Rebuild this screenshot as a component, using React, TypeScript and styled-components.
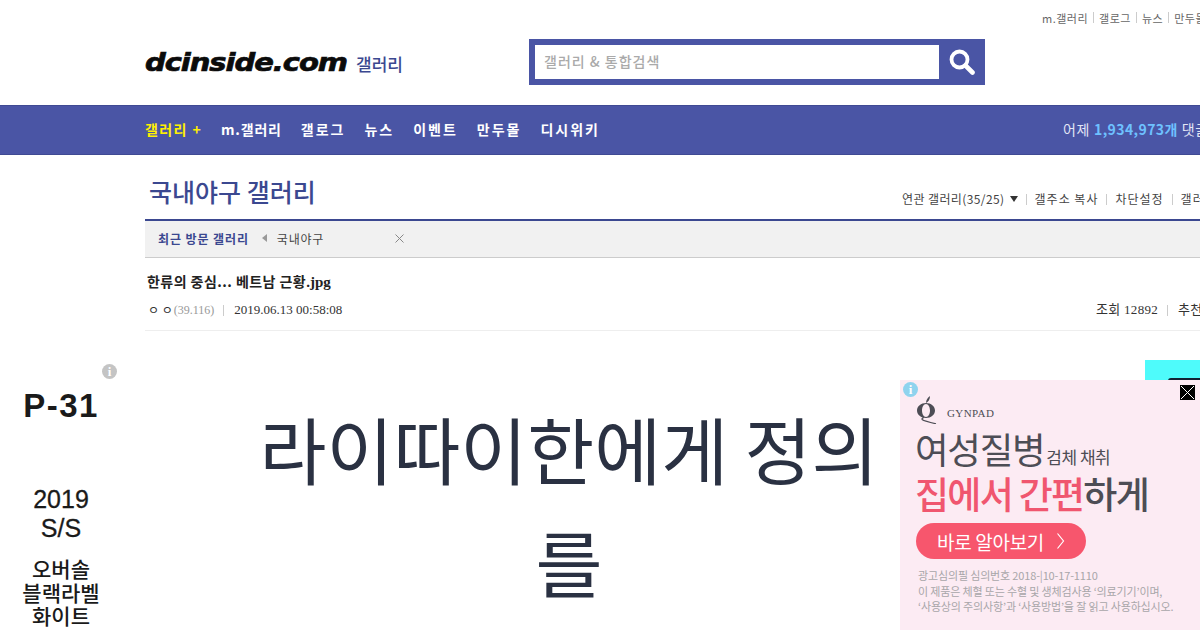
import styled, { createGlobalStyle } from 'styled-components';

const navItems = [
  { label: 'm.갤러리', spacing: 0.8 },
  { label: '갤로그', spacing: 2 },
  { label: '뉴스', spacing: 2 },
  { label: '이벤트', spacing: 2 },
  { label: '만두몰', spacing: 2 },
  { label: '디시위키', spacing: 2 },
];
const topLinks = ['m.갤러리', '갤로그', '뉴스', '만두몰'];
const toolLinks = ['갤주소 복사', '차단설정', '갤러리 정보'];

const App = () => {
  return (
    <Page>
      <GlobalStyle />
      <Header>
        <TopLinks>
          {topLinks.map((link, i) => (
            <TopLink key={link} $first={i === 0}>
              {link}
            </TopLink>
          ))}
        </TopLinks>
        <HeaderMain>
          <LogoWrap>
            <Logo>dcinside.com</Logo>
            <LogoSub>갤러리</LogoSub>
          </LogoWrap>
          <SearchBox>
            <SearchInput>갤러리 &amp; 통합검색</SearchInput>
            <SearchButton>
              <svg width='26' height='26' viewBox='0 0 26 26'>
                <circle cx='10.5' cy='10.5' r='8' fill='none' stroke='#fff' strokeWidth='3.8' />
                <path d='M16.5 16.5l7 7' stroke='#fff' strokeWidth='4.6' strokeLinecap='round' />
              </svg>
            </SearchButton>
          </SearchBox>
        </HeaderMain>
      </Header>

      <Nav>
        <NavList>
          <NavItem $active $spacing={1.4}>
            갤러리 +
          </NavItem>
          {navItems.map(item => (
            <NavItem key={item.label} $spacing={item.spacing}>
              {item.label}
            </NavItem>
          ))}
        </NavList>
        <NavStats>
          어제 <strong>1,934,973개</strong> 댓글
        </NavStats>
      </Nav>

      <Content>
        <TitleRow>
          <GalleryTitle>국내야구 갤러리</GalleryTitle>
          <Tools>
            <Related>
              연관 갤러리(35/25)
              <Caret />
            </Related>
            {toolLinks.map(link => (
              <ToolLink key={link}>{link}</ToolLink>
            ))}
          </Tools>
        </TitleRow>

        <RecentBar>
          <RecentLabel>최근 방문 갤러리</RecentLabel>
          <BackArrow />
          <RecentName>국내야구</RecentName>
          <svg width='9' height='9' viewBox='0 0 9 9'>
            <path d='M.5.5l8 8M8.5.5l-8 8' stroke='#888' strokeWidth='1' />
          </svg>
        </RecentBar>

        <PostTitle>
          한류의 중심... 베트남 근황<span>.jpg</span>
        </PostTitle>
        <PostMeta>
          <Writer>ㅇ ㅇ</Writer>
          <Ip>(39.116)</Ip>
          <DateText>2019.06.13 00:58:08</DateText>
          <Counts>
            <span>조회 12892</span>
            <CountItem>추천 128</CountItem>
          </Counts>
        </PostMeta>
      </Content>

      <Article>
        <ArticleText>
          라이따이한에게 정의
          <br />를
        </ArticleText>
      </Article>

      <SideAd>
        <InfoDot $bg='#c4c4c4'>i</InfoDot>
        <SideBrand>P-31</SideBrand>
        <SideSeason>
          2019
          <br />
          S/S
        </SideSeason>
        <SideName>
          오버솔
          <br />
          블랙라벨
          <br />
          화이트
        </SideName>
      </SideAd>

      <CyanAd />

      <FloatAd>
        <FloatInfo>
          <InfoDot $bg='#8fd3ee'>i</InfoDot>
        </FloatInfo>
        <CloseButton>
          <svg width='15' height='15' viewBox='0 0 15 15'>
            <path d='M1 1l13 13M14 1L1 14' stroke='#fff' strokeWidth='1' />
          </svg>
        </CloseButton>
        <AdLogo>
          <svg width='20' height='28' viewBox='0 0 20 28'>
            <path
              fillRule='evenodd'
              d='M9 7c5 0 9 3.4 9 7.500s-4 7.500-9 7.500-9-3.400-9-7.500S4 7 9 7zm0 1c-2.200 0-4 2.900-4 6.500S6.800 21 9 21s4-2.900 4-6.500S11.200 8 9 8z'
              fill='#4d4d55'
            />
            <path d='M9 7q0-4 4-7q0 5-4 7z' fill='#4d4d55' />
            <path d='M7 21.500q-3 1-1.500 2.300t13.500 4' fill='none' stroke='#4d4d55' strokeWidth='1.2' />
          </svg>
          <AdBrand>GYNPAD</AdBrand>
        </AdLogo>
        <AdHeadline>
          여성질병 <small>검체 채취</small>
        </AdHeadline>
        <AdHeadlineTwo>
          <em>집에서 간편</em>하게
        </AdHeadlineTwo>
        <AdButton>
          바로 알아보기
          <svg width='9' height='18' viewBox='0 0 9 18'>
            <path d='M1.500 1.500l6 7.500-6 7.500' fill='none' stroke='#fff' strokeWidth='1.2' />
          </svg>
        </AdButton>
        <AdFine>
          광고심의필 심의번호 2018-|10-17-1110
          <br />이 제품은 체혈 또는 수혈 및 생체검사용 ‘의료기기’이며,
          <br />
          ‘사용상의 주의사항’과 ‘사용방법’을 잘 읽고 사용하십시오.
        </AdFine>
      </FloatAd>
    </Page>
  );
};

const GlobalStyle = createGlobalStyle`
  html, body {
    margin: 0;
    width: 1200px;
    height: 630px;
    overflow: hidden;
    background: #fff;
  }
`;

const Page = styled.div`
  position: relative;
  width: 1200px;
  height: 630px;
  overflow: hidden;
  font-family: 'Noto Sans CJK KR', 'Liberation Sans', sans-serif;
  color: #333;
`;

const Header = styled.header`
  height: 105px;
  display: flex;
  flex-direction: column;
`;

const TopLinks = styled.div`
  height: 39px;
  padding: 10px 0 0 1042px;
  box-sizing: border-box;
  display: flex;
  white-space: nowrap;
  font-size: 11px;
  line-height: 15px;
  letter-spacing: 0.5px;
  color: #666;
`;

const TopLink = styled.span<{ $first?: boolean }>`
  ${p => (p.$first ? '' : 'border-left: 1px solid #ccc; margin-left: 5px; padding-left: 5px;')}
  height: 11px;
  line-height: 13px;
  margin-top: 2px;
`;

const HeaderMain = styled.div`
  height: 46px;
  padding-left: 145px;
  display: flex;
  align-items: center;
`;

const LogoWrap = styled.div`
  width: 384px;
  display: flex;
  align-items: center;
  gap: 9px;
`;

const Logo = styled.span`
  display: inline-block;
  width: 202px;
  transform: scaleX(1.16);
  transform-origin: left center;
  font-family: 'DejaVu Sans', sans-serif;
  font-weight: 700;
  font-style: italic;
  font-size: 25px;
  letter-spacing: -0.9px;
  color: #0b0b0b;
  -webkit-text-stroke: 0.7px #0b0b0b;
`;

const LogoSub = styled.span`
  font-size: 17px;
  font-weight: 500;
  margin-top: 2px;
  color: #3b4890;
`;

const SearchBox = styled.div`
  width: 456px;
  height: 46px;
  box-sizing: border-box;
  padding: 6px 0 6px 6px;
  background: #4a55a5;
  display: flex;
`;

const SearchInput = styled.div`
  width: 404px;
  padding-left: 9px;
  box-sizing: border-box;
  background: #fff;
  font-size: 14px;
  font-weight: 500;
  line-height: 33px;
  letter-spacing: 1px;
  color: #aaa;
`;

const SearchButton = styled.div`
  flex: 1;
  display: flex;
  align-items: center;
  justify-content: center;
`;

const Nav = styled.nav`
  height: 50px;
  box-sizing: border-box;
  background: #4a55a5;
  border-top: 1px solid #3f4a93;
  border-bottom: 1px solid #3f4a93;
  padding: 0 0 2px 145px;
  display: flex;
  align-items: center;
  white-space: nowrap;
`;

const NavList = styled.div`
  width: 918px;
  flex-shrink: 0;
  display: flex;
  gap: 19px;
`;

const NavItem = styled.span<{ $active?: boolean; $spacing: number }>`
  font-size: 14px;
  font-weight: 700;
  letter-spacing: ${p => p.$spacing}px;
  color: ${p => (p.$active ? '#fff000' : '#fff')};
`;

const NavStats = styled.div`
  flex-shrink: 0;
  font-size: 14px;
  letter-spacing: 0.7px;
  color: #e3e6f5;

  strong {
    color: #6ec1ff;
    font-weight: 700;
    letter-spacing: 0.4px;
  }
`;

const Content = styled.main`
  margin-left: 145px;
  width: 1100px;
`;

const TitleRow = styled.div`
  height: 66px;
  box-sizing: border-box;
  border-bottom: 2px solid #3b4890;
  padding: 18px 0 0 4px;
  display: flex;
  justify-content: space-between;
`;

const GalleryTitle = styled.h1`
  margin: 0;
  font-size: 25px;
  line-height: 36px;
  font-weight: 500;
  color: #3b4890;
`;

const Tools = styled.div`
  width: 343px;
  margin-top: 17px;
  display: flex;
  height: 18px;
  font-size: 12px;
  line-height: 18px;
  color: #444;
  white-space: nowrap;
`;

const Related = styled.span`
  display: flex;
  align-items: center;
  gap: 5px;
  letter-spacing: 0.4px;
`;

const Caret = styled.i`
  width: 0;
  height: 0;
  border-left: 4.5px solid transparent;
  border-right: 4.5px solid transparent;
  border-top: 6px solid #333;
`;

const ToolLink = styled.span`
  margin-left: 8px;
  padding-left: 9px;
  position: relative;
  letter-spacing: 1px;

  &::before {
    content: '';
    position: absolute;
    left: 0;
    top: 4px;
    height: 11px;
    border-left: 1px solid #ccc;
  }
`;

const RecentBar = styled.div`
  height: 37px;
  box-sizing: border-box;
  background: #f1f1f1;
  border-bottom: 1px solid #ccc;
  padding: 0 0 2px 13px;
  display: flex;
  align-items: center;
  font-size: 12px;
`;

const RecentLabel = styled.span`
  font-weight: 700;
  letter-spacing: 0.9px;
  color: #3b4890;
`;

const BackArrow = styled.i`
  margin: 0 10px 0 13px;
  width: 0;
  height: 0;
  border-top: 4px solid transparent;
  border-bottom: 4px solid transparent;
  border-right: 5px solid #999;
`;

const RecentName = styled.span`
  width: 118px;
  letter-spacing: 0.8px;
  color: #444;
`;

const PostTitle = styled.h2`
  margin: 0;
  padding: 13px 0 0 2px;
  height: 36px;
  box-sizing: border-box;
  font-size: 14px;
  line-height: 20px;
  font-weight: 700;
  letter-spacing: 0.45px;
  color: #222;

  span {
    font-family: 'Liberation Serif', serif;
    font-size: 15px;
    letter-spacing: 0;
  }
`;

const PostMeta = styled.div`
  height: 37px;
  box-sizing: border-box;
  border-bottom: 1px solid #eee;
  padding: 6px 0 0 3px;
  display: flex;
  font-size: 13px;
  line-height: 20px;
  font-family: 'Liberation Serif', 'Noto Sans CJK KR', serif;
  color: #333;
`;

const Writer = styled.span`
  font-family: 'Noto Sans CJK KR', sans-serif;
  font-size: 12px;
`;

const Ip = styled.span`
  margin-left: 1px;
  font-size: 12px;
  color: #999;
`;

const DateText = styled.span`
  margin-left: 9px;
  padding-left: 11px;
  background: linear-gradient(#ccc, #ccc) no-repeat left 5px / 1px 11px;
`;

const Counts = styled.div`
  margin-left: auto;
  width: 149px;
  display: flex;
  white-space: nowrap;
  letter-spacing: 0.3px;
`;

const CountItem = styled.span`
  margin-left: 9px;
  padding-left: 11px;
  background: linear-gradient(#ccc, #ccc) no-repeat left 5px / 1px 11px;
`;

const Article = styled.section`
  margin-left: 145px;
  width: 848px;
  padding-top: 60px;
  display: flex;
  justify-content: center;
`;

const ArticleText = styled.p`
  margin: 0;
  text-align: center;
  white-space: nowrap;
  font-size: 72.8px;
  line-height: 113px;
  font-weight: 400;
  color: #2a3142;
`;

const SideAd = styled.aside`
  position: absolute;
  left: 0;
  top: 360px;
  width: 122px;
  text-align: center;
  color: #1a1a1a;
`;

const InfoDot = styled.span<{ $bg: string }>`
  position: absolute;
  right: 5px;
  top: 4px;
  width: 15px;
  height: 15px;
  border-radius: 50%;
  background: ${p => p.$bg};
  color: #fff;
  font-family: 'Liberation Serif', serif;
  font-size: 13px;
  font-weight: 700;
  line-height: 15px;
  text-align: center;
`;

const SideBrand = styled.div`
  margin-top: 27px;
  font-family: 'Liberation Sans', sans-serif;
  font-size: 33px;
  font-weight: 700;
  line-height: 38px;
  letter-spacing: 1.5px;
`;

const SideSeason = styled.div`
  margin-top: 60px;
  font-family: 'Liberation Sans', sans-serif;
  font-size: 25px;
  line-height: 29px;
  -webkit-text-stroke: 0.3px #1a1a1a;
`;

const SideName = styled.div`
  margin-top: 14px;
  font-size: 21px;
  font-weight: 500;
  line-height: 23.5px;
`;

const CyanAd = styled.div`
  position: absolute;
  left: 1145px;
  top: 360px;
  width: 55px;
  height: 30px;
  background: #4efbfb;

  &::after {
    content: '';
    position: absolute;
    left: 23px;
    top: 18px;
    right: 0;
    height: 12px;
    background: #123;
    border-radius: 3px 0 0 0;
  }
`;

const FloatAd = styled.aside`
  position: absolute;
  left: 900px;
  top: 380px;
  width: 300px;
  height: 250px;
  box-sizing: border-box;
  padding: 16px 0 0 15px;
  background: #fcebf3;
  color: #4d4d55;
  white-space: nowrap;
`;

const FloatInfo = styled.div`
  position: absolute;
  left: 1px;
  top: -2px;
  width: 22px;
  height: 18px;
`;

const CloseButton = styled.div`
  position: absolute;
  right: 5px;
  top: 5px;
  width: 15px;
  height: 15px;
  background: #000;
  display: flex;
`;

const AdLogo = styled.div`
  height: 28px;
  padding-left: 2px;
  display: flex;
  align-items: center;
  gap: 10px;
`;

const AdBrand = styled.span`
  margin-top: 6px;
  font-family: 'Liberation Serif', serif;
  font-size: 11px;
  letter-spacing: 0.4px;
`;

const AdHeadline = styled.div`
  height: 45px;
  margin-top: 2px;
  font-size: 36.6px;
  line-height: 45px;
  letter-spacing: -1.3px;

  small {
    margin-left: -5px;
    font-size: 17px;
    letter-spacing: -0.5px;
  }
`;

const AdHeadlineTwo = styled.div`
  height: 45px;
  font-size: 37px;
  line-height: 45px;
  font-weight: 500;
  letter-spacing: -1.7px;

  em {
    font-style: normal;
    color: #f0566f;
  }
`;

const AdButton = styled.div`
  margin: 7px 0 0 1px;
  width: 170px;
  height: 36px;
  border-radius: 18px;
  background: #f7566d;
  color: #fff;
  display: flex;
  align-items: center;
  justify-content: center;
  gap: 12px;
  font-size: 19px;
  letter-spacing: -0.3px;
`;

const AdFine = styled.div`
  margin: 9px 0 0 3px;
  font-size: 11px;
  line-height: 15.5px;
  color: #a8a6a9;
  letter-spacing: -0.15px;
`;

export default App;
